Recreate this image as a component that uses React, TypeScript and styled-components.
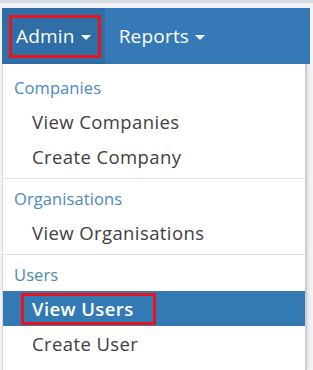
import React from "react";
import styled, { createGlobalStyle } from "styled-components";

const GlobalStyle = createGlobalStyle`
  html, body {
    margin: 0;
    padding: 0;
    background: #eef0f3;
    font-family: "Open Sans", "DejaVu Sans", sans-serif;
  }
`;

const Page = styled.div`
  display: flex;
  flex-direction: column;
  width: 313px;
  height: 370px;
  overflow: hidden;
  border-top: 3px solid #d6dbe3;
  box-sizing: border-box;
  background: #f3f4f7;
`;

const NavBar = styled.div`
  display: flex;
  align-items: stretch;
  margin: 5px 3px 0 2px;
  height: 56px;
  background: #357ab6;
  flex-shrink: 0;
`;

const NavItem = styled.div<{ $active?: boolean }>`
  display: flex;
  align-items: center;
  padding: ${(p) => (p.$active ? "0 4px 0 7px" : "0 0 0 14px")};
  background: ${(p) => (p.$active ? "#2f6ea6" : "transparent")};
  color: #fff;
  font-size: 19px;
  letter-spacing: 0.2px;
`;

const Marked = styled.span`
  display: inline-flex;
  align-items: center;
  border: 3px solid #e8141c;
`;

const NavLabel = styled.span<{ $marked?: boolean }>`
  display: inline-flex;
  align-items: center;
  gap: 6px;
  height: ${(p) => (p.$marked ? "37px" : "auto")};
  padding: ${(p) => (p.$marked ? "0 7px 0 4px" : "0")};
`;

const Caret = styled.span`
  width: 0;
  height: 0;
  margin-top: 2px;
  border-left: 5px solid transparent;
  border-right: 5px solid transparent;
  border-top: 5px solid #fff;
`;

const Dropdown = styled.div`
  display: flex;
  flex-direction: column;
  flex: 1;
  margin: 0 6px 0 2px;
  padding-top: 4px;
  background: #fff;
  border-left: 1px solid #d8d8d8;
  border-right: 2px solid #cdcdcd;
  box-shadow: 2px 0 3px rgba(0, 0, 0, 0.08);
`;

const Header = styled.div`
  padding: 8px 0 4px 11px;
  line-height: 24px;
  font-size: 16.5px;
  letter-spacing: 0.1px;
  color: #4d88bf;
`;

const Item = styled.div<{ $active?: boolean }>`
  display: flex;
  align-items: center;
  height: 35px;
  padding-left: ${(p) => (p.$active ? "18px" : "29px")};
  font-size: 18.5px;
  letter-spacing: 0.4px;
  font-weight: ${(p) => (p.$active ? 600 : 400)};
  color: ${(p) => (p.$active ? "#fff" : "#404040")};
  background: ${(p) => (p.$active ? "#337ab5" : "transparent")};
`;

const ItemMark = styled.span`
  display: inline-flex;
  align-items: center;
  height: 26px;
  padding: 0 19px 0 8px;
  border: 3px solid #e8141c;
`;

const Divider = styled.div`
  height: 1px;
  margin-top: 4px;
  background: #e3e3e3;
`;

type Section = { title: string; items: string[] };

const sections: Section[] = [
  { title: "Companies", items: ["View Companies", "Create Company"] },
  { title: "Organisations", items: ["View Organisations"] },
  { title: "Users", items: ["View Users", "Create User"] },
];

export default function App() {
  return (
    <>
      <GlobalStyle />
      <Page>
        <NavBar>
          <NavItem $active>
            <Marked>
              <NavLabel $marked>
                Admin <Caret />
              </NavLabel>
            </Marked>
          </NavItem>
          <NavItem>
            <NavLabel>
              Reports <Caret />
            </NavLabel>
          </NavItem>
        </NavBar>
        <Dropdown>
          {sections.map((s, i) => (
            <React.Fragment key={s.title}>
              {i > 0 && <Divider />}
              <Header>{s.title}</Header>
              {s.items.map((it) =>
                it === "View Users" ? (
                  <Item key={it} $active>
                    <ItemMark>{it}</ItemMark>
                  </Item>
                ) : (
                  <Item key={it}>{it}</Item>
                )
              )}
            </React.Fragment>
          ))}
        </Dropdown>
      </Page>
    </>
  );
}
